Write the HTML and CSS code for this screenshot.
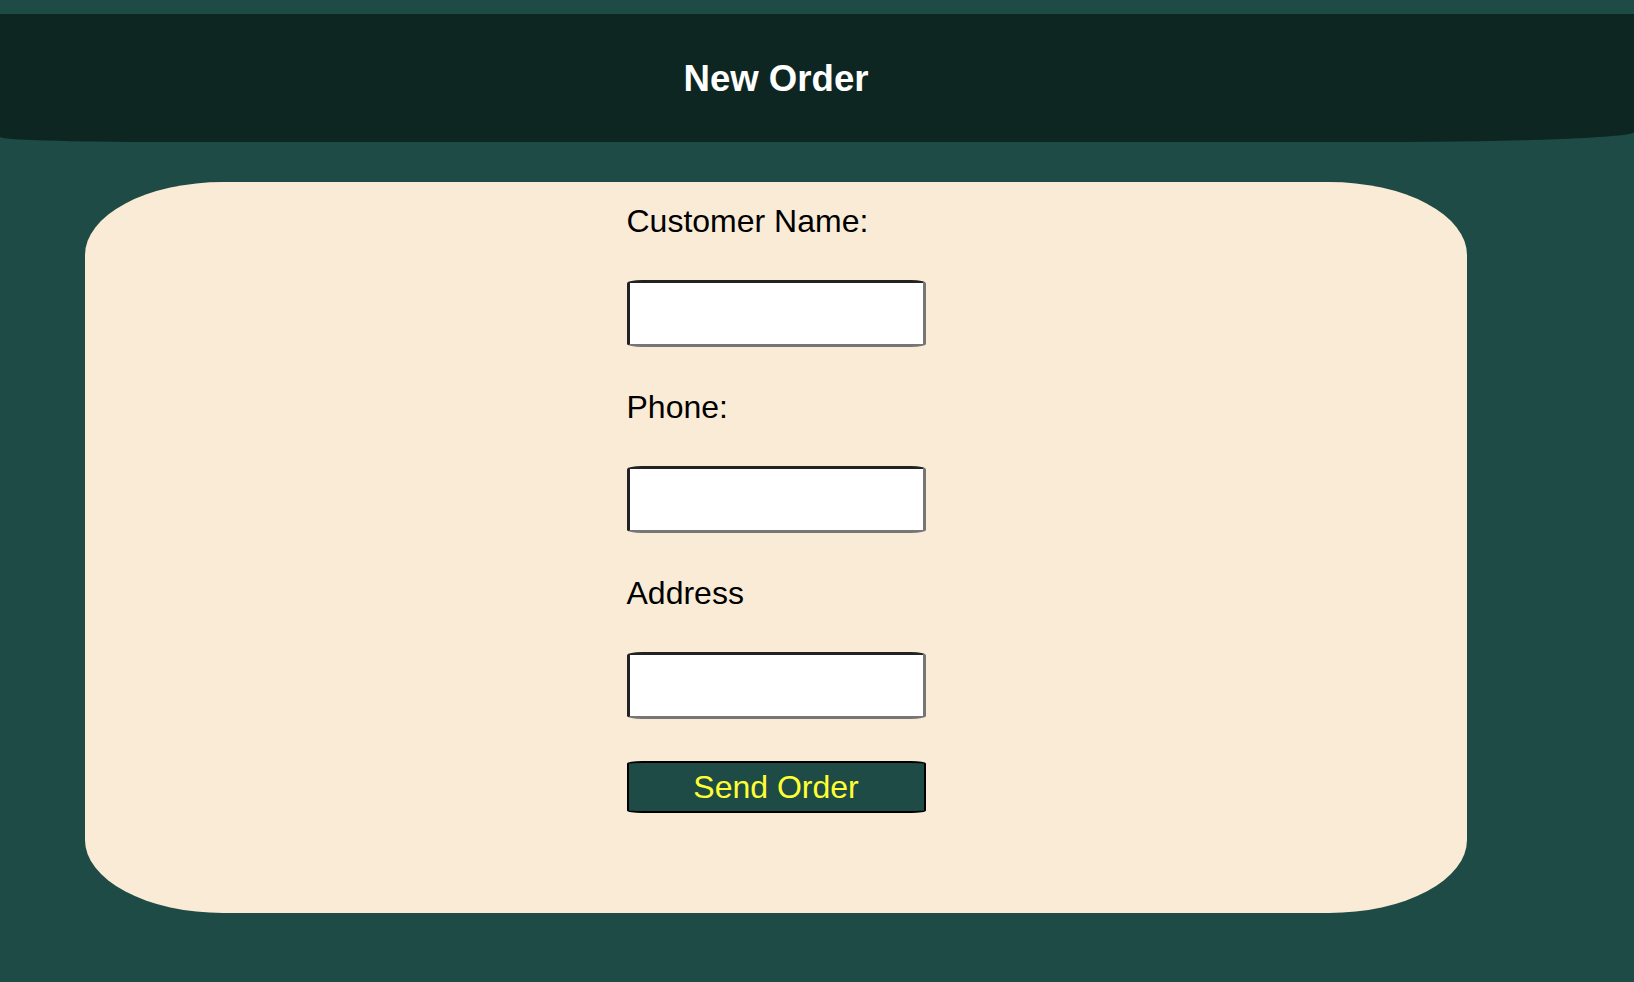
FILE: index.html
```html
<!DOCTYPE html>
<html lang="en">
<head>
<meta charset="utf-8">
<title>New Order</title>
<link rel="stylesheet" href="styles.css">
</head>
<body>
  <header class="topbar">
    <h1 class="topbar-title">New Order</h1>
  </header>
  <main class="card">
    <form class="order-form">
      <label class="field-label" for="name">Customer Name:</label>
      <input class="field-input" id="name" type="text">
      <label class="field-label" for="phone">Phone:</label>
      <input class="field-input" id="phone" type="text">
      <label class="field-label" for="address">Address</label>
      <input class="field-input" id="address" type="text">
      <button class="send-btn" type="button">Send Order</button>
    </form>
  </main>
</body>
</html>
```

FILE: styles.css
```css
html, body {
  margin: 0;
  padding: 0;
}

body {
  background: #1e4b45;
  font-family: "Liberation Sans", Arial, Helvetica, sans-serif;
  min-height: 982px;
  padding-top: 14px;
  box-sizing: border-box;
}

.topbar {
  background: #0e2622;
  height: 128px;
  display: flex;
  align-items: center;
  justify-content: center;
  padding: 2px 167px 0 85px;
  box-sizing: border-box;
  border-radius: 0 0 252px 160px / 0 0 10px 5px;
}

.topbar-title {
  margin: 0;
  color: #ffffff;
  font-size: 36.6px;
  font-weight: bold;
  line-height: 1;
}

.card {
  display: block;
  margin: 40px 0 0 85px;
  width: 1382px;
  background: #faebd7;
  border-radius: 10% / 10%;
  padding: 21px 0 100px;
  box-sizing: border-box;
}

.order-form {
  width: 299px;
  margin: 0 auto;
  display: flex;
  flex-direction: column;
}

.field-label {
  display: block;
  font-size: 32px;
  line-height: 37px;
  color: #000;
  margin-bottom: 40px;
}

.field-input {
  display: block;
  width: 299px;
  height: 67px;
  box-sizing: border-box;
  margin: 0 0 42px;
  padding: 0 8px;
  background: #ffffff;
  border-width: 3px;
  border-style: solid;
  border-color: #222222 #767676 #767676 #222222;
  border-radius: 5%;
  font-size: 24px;
  font-family: inherit;
}

.send-btn {
  display: block;
  width: 299px;
  height: 52px;
  box-sizing: border-box;
  margin: 0;
  padding: 0;
  background: #1e4b45;
  color: #ffff33;
  border: 2px solid #000;
  border-radius: 5%;
  font-family: inherit;
  font-size: 32px;
  line-height: 1;
  cursor: pointer;
}
```
